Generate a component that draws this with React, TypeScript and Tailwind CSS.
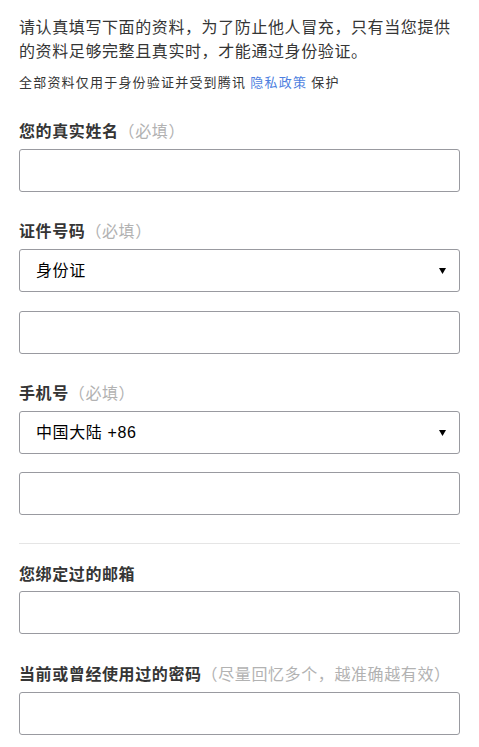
import React from "react";

const font = {
  fontFamily: '"Microsoft YaHei", "Noto Sans CJK SC", "Liberation Sans", sans-serif',
};

const Label = ({ text, hint }: { text: string; hint?: string }) => (
  <div className="text-[16px] leading-[24px] font-bold tracking-[0.6px] text-[#353535]">
    {text}
    {hint && <span className="font-normal text-[#b2b2b2]">{hint}</span>}
  </div>
);

const Input = () => (
  <input
    type="text"
    className="block w-full h-[43px] px-4 border border-[#999aa0] rounded-[3px] bg-white text-[16px] outline-none"
  />
);

const Select = ({ value }: { value: string }) => (
  <div className="flex items-center justify-between w-full h-[43px] pl-[16px] pr-[13px] border border-[#999aa0] rounded-[3px] bg-white">
    <span
      className="text-[16px] tracking-[0.6px] text-black"
      style={{ fontFamily: '"Liberation Sans", "Noto Sans CJK SC", sans-serif' }}
    >
      {value}
    </span>
    <svg width="7" height="6" viewBox="0 0 7 6">
      <path d="M0 0 H7 L3.5 6 Z" fill="#000" />
    </svg>
  </div>
);

export default function App() {
  return (
    <div className="min-h-screen bg-white px-[19px] pt-[14px]" style={font}>
      <p className="text-[16px] leading-[24px] tracking-[0.6px] text-[#353535]">
        请认真填写下面的资料，为了防止他人冒充，只有当您提供的资料足够完整且真实时，才能通过身份验证。
      </p>
      <p className="mt-[11px] text-[13px] leading-[18px] tracking-[1.2px] text-[#353535]">
        全部资料仅用于身份验证并受到腾讯 <span className="text-[#4e7fe0]">隐私政策</span> 保护
      </p>

      <div className="mt-[27px]">
        <Label text="您的真实姓名" hint="（必填）" />
        <div className="mt-[7px]">
          <Input />
        </div>
      </div>

      <div className="mt-[26px]">
        <Label text="证件号码" hint="（必填）" />
        <div className="mt-[7px] flex flex-col gap-[19px]">
          <Select value="身份证" />
          <Input />
        </div>
      </div>

      <div className="mt-[26px]">
        <Label text="手机号" hint="（必填）" />
        <div className="mt-[7px] flex flex-col gap-[18px]">
          <Select value="中国大陆 +86" />
          <Input />
        </div>
      </div>

      <div className="mt-[28px] border-t border-[#e5e5e5]" />

      <div className="mt-[17px]">
        <Label text="您绑定过的邮箱" />
        <div className="mt-[6px]">
          <Input />
        </div>
      </div>

      <div className="mt-[27px]">
        <Label text="当前或曾经使用过的密码" hint="（尽量回忆多个，越准确越有效）" />
        <div className="mt-[7px]">
          <Input />
        </div>
      </div>
    </div>
  );
}
